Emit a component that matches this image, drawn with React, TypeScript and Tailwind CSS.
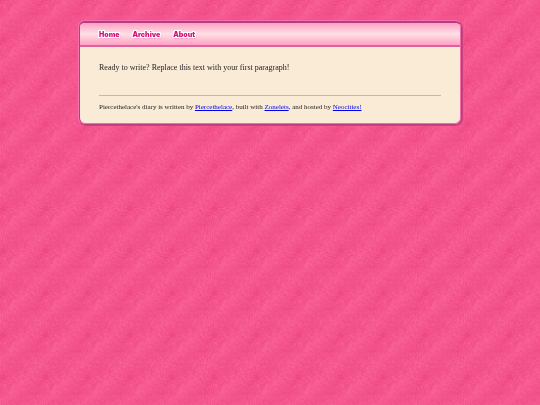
import * as React from 'react'

const TILE = 42
const SHADES = ['#e9437f', '#ee4883', '#f25089', '#f6588f', '#fa6196', '#fd689b']

// Small seeded generator so the texture is the same on every load
function createRandom(seed: number) {
  let state = seed
  return () => {
    state = (state * 1664525 + 1013904223) % 4294967296
    return state / 4294967296
  }
}

// One path per shade, covering a seamless tile with light and dark patches
function buildTexture() {
  const random = createRandom(77)
  const paths = SHADES.map(() => '')
  const turn = (2 * Math.PI) / TILE

  for (let y = 0; y < TILE; y++) {
    for (let x = 0; x < TILE; x++) {
      const band = Math.cos(turn * (x + y - 23))
      const spots = Math.cos(2 * turn * (x - 12)) * Math.cos(2 * turn * (y - 12))
      const ripple = Math.cos(3 * turn * (x + 11)) * Math.cos(3 * turn * (y - 5))
      const noise = random() + random() - 1
      const value = 2.5 + band * 0.65 + spots * 0.25 + ripple * 0.15 + noise * 2.2
      const shade = Math.max(0, Math.min(SHADES.length - 1, Math.round(value)))
      paths[shade] += `M${x} ${y}h1v1h-1z`
    }
  }
  return paths
}

const texture = buildTexture()

const navLinks = [
  { label: 'Home', href: '#home' },
  { label: 'Archive', href: '#archive' },
  { label: 'About', href: '#about' }
]

function Background() {
  return (
    <svg className="fixed inset-0 -z-10 h-full w-full" aria-hidden="true">
      <defs>
        <pattern
          id="glitter"
          width="42.1875"
          height="42.1875"
          patternUnits="userSpaceOnUse"
          viewBox="0 0 42 42"
        >
          <rect width="42" height="42" fill="#f4538c" />
          {texture.map((d, index) => (
            <path key={SHADES[index]} d={d} fill={SHADES[index]} />
          ))}
        </pattern>
      </defs>
      <rect width="100%" height="100%" fill="url(#glitter)" />
    </svg>
  )
}

function Header() {
  return (
    <header className="border-b-2 border-[#e0609a] bg-linear-to-b from-[#ff9fc4] via-[#ffe0e6] to-[#ff9fc4]">
      <nav className="flex h-[22px] items-center gap-[13px] px-[19px]">
        {navLinks.map(link => (
          <a
            key={link.label}
            href={link.href}
            className="font-['Inter',sans-serif] text-[7px] leading-none font-black text-[#d6127a] [text-shadow:1px_0_#fff,-1px_0_#fff,0_1px_#fff,0_-1px_#fff,1px_1px_#fff,-1px_-1px_#fff,1px_-1px_#fff,-1px_1px_#fff,1px_2px_2px_#f08cc4]"
          >
            {link.label}
          </a>
        ))}
      </nav>
    </header>
  )
}

function Footer() {
  const linkClass = 'text-[#0000ee] underline'
  return (
    <footer className="border-t border-[#c9b994] pt-1.5 text-[7px] leading-[10px]">
      Piercethelace&apos;s diary is written by{' '}
      <a href="#piercethelace" className={linkClass}>Piercethelace</a>, built with{' '}
      <a href="#zonelets" className={linkClass}>Zonelets</a>, and hosted by{' '}
      <a href="#neocities" className={linkClass}>Neocities!</a>
    </footer>
  )
}

export default function App() {
  return (
    <div className="relative isolate min-h-screen px-4 pt-5 font-['Liberation_Serif',serif] text-[#222]">
      <Background />
      {/* Bevelled frame: two nested borders with opposite light and dark sides */}
      <div className="mx-auto max-w-96 rounded-[7px] border border-t-[#f56fae] border-l-[#f56fae] border-r-[#b63d7e] border-b-[#b63d7e] shadow-[1px_1px_0_#c8457f,-1px_0_0_#ee5c9c]">
        <div className="overflow-hidden rounded-md border border-t-2 border-t-[#b63d7e] border-l-[#b63d7e] border-r-[#f36cab] border-b-[#f36cab] bg-[#faebd7]">
          <Header />
          <div className="px-[19px] pt-[15px] pb-[11px]">
            <main className="pb-[22px]">
              <p className="text-[8px] leading-[11px]">
                Ready to write? Replace this text with your first paragraph!
              </p>
            </main>
            <Footer />
          </div>
        </div>
      </div>
    </div>
  )
}
